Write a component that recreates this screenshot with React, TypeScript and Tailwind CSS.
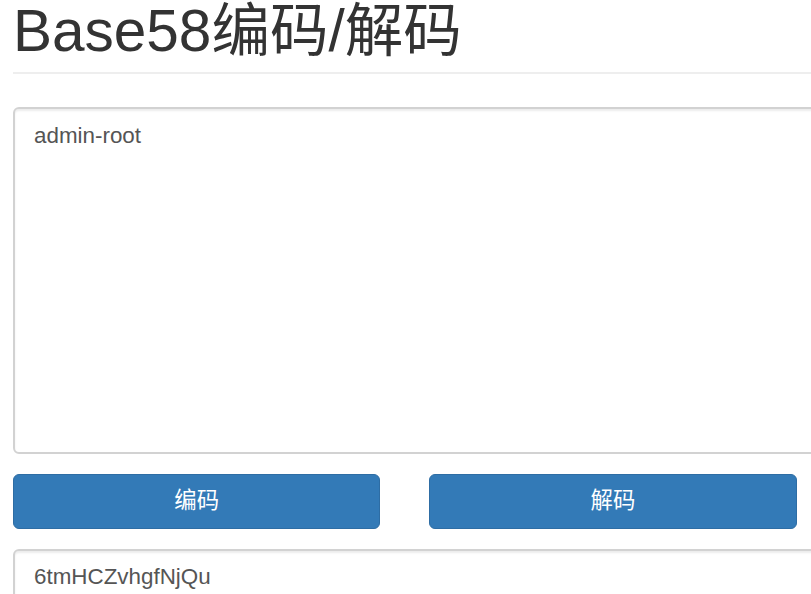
import React from 'react';

export default function App() {
  return (
    <div className="w-full h-screen overflow-hidden bg-white text-[#333] font-['Liberation_Sans','Noto_Sans_CJK_SC',sans-serif]">
      <div className="w-[1213px] pl-[13px]">
        <div className="border-b-2 border-[#eeeeee] pt-[2px] pb-[11px]">
          <h1 className="text-[58.5px] leading-none font-normal text-[#333]">Base58编码/解码</h1>
        </div>

        <textarea
          className="mt-[33px] block w-full h-[347px] rounded-[6px] border-2 border-[#d2d2d2] px-[19px] pt-[11px] pb-[9px] text-[22.4px] leading-[32px] text-[#555] shadow-[inset_0_2px_2px_rgba(0,0,0,0.075)] resize-none outline-none"
          defaultValue="admin-root"
        />

        <div className="mt-[20px] grid grid-cols-3 gap-[49px]">
          <button className="h-[55px] rounded-[6px] border border-[#2e6da4] bg-[#337ab7] text-white text-[22.4px]">
            编码
          </button>
          <button className="h-[55px] rounded-[6px] border border-[#2e6da4] bg-[#337ab7] text-white text-[22.4px]">
            解码
          </button>
          <div />
        </div>

        <input
          className="mt-[20px] block w-full h-[54px] rounded-[6px] border-2 border-[#d2d2d2] px-[19px] pt-[2px] text-[22.4px] text-[#555] shadow-[inset_0_2px_2px_rgba(0,0,0,0.075)] outline-none"
          defaultValue="6tmHCZvhgfNjQu"
        />
      </div>
    </div>
  );
}
